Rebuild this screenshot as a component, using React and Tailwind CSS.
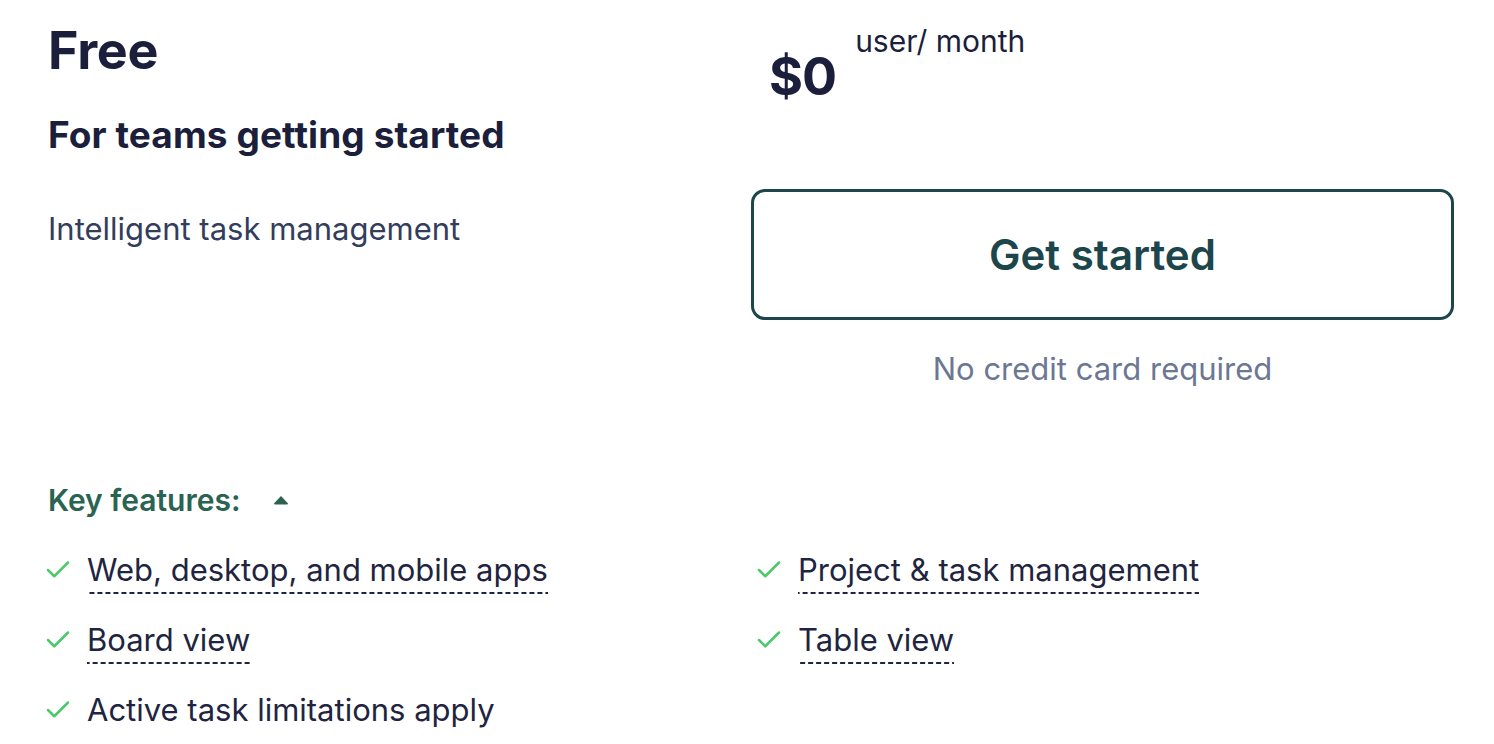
import { Check } from 'lucide-react'

const leftFeatures  = [
  { label: 'Web, desktop, and mobile apps', dashed: true },
  { label: 'Board view',                    dashed: true },
  { label: 'Active task limitations apply', dashed: false },
]
const rightFeatures = [
  { label: 'Project & task management', dashed: true },
  { label: 'Table view',                dashed: true },
]

function Feature({ label, dashed }) {
  return (
    <li className="flex items-start h-[70px]">
      <Check className="w-[30px] h-[30px] -ml-[5px] mt-[4px] text-[#4cc96a] shrink-0" strokeWidth={2} />
      <span
        className={`ml-[14px] text-[31px] leading-[38px] text-[#1f2540] pb-[5px] ${
          dashed
            ? 'bg-[linear-gradient(to_right,#1f2540_5px,transparent_5px)] bg-[length:8px_2px] bg-repeat-x bg-bottom'
            : ''
        }`}
      >
        {label}
      </span>
    </li>
  )
}

export default function App() {
  return (
    <div className="min-h-screen bg-white px-12 font-['Inter',sans-serif] overflow-hidden">
      <div className="grid grid-cols-[655px_703px] gap-12">
        <div className="pt-[20px]">
          <h1 className="text-[52px] leading-[62px] font-bold text-[#1b1f3b] tracking-[-0.3px]">Free</h1>
          <h2 className="mt-[31px] text-[37px] leading-[44px] font-bold text-[#1b1f3b] tracking-[0.1px]">For teams getting started</h2>
          <p className="mt-[53px] text-[31px] leading-[38px] text-[#333d5c]">Intelligent task management</p>
        </div>

        <div className="pt-[24px]">
          <div className="flex items-start pl-[18px]">
            <span className="mt-[23px] text-[52px] leading-[60px] font-bold text-[#1b1f3b] tracking-[-1px]">$0</span>
            <span className="ml-[19px] text-[30px] leading-[34px] text-[#1b1f3b]">user/ month</span>
          </div>
          <button className="mt-[82px] w-full h-[131px] rounded-[14px] border-[3px] border-[#1d464c] text-[42px] font-semibold text-[#1d464c]">
            Get started
          </button>
          <p className="mt-[30px] text-center text-[31px] leading-[38px] text-[#6b7793]">No credit card required</p>
        </div>
      </div>

      <div className="mt-[95px] flex items-center">
        <span className="text-[30px] leading-[34px] font-semibold text-[#2a6352]">Key features:</span>
        <svg className="ml-[32px]" width="16" height="10" viewBox="0 0 16 10">
          <path d="M8 1 L15 8.5 Q15 9.5 14 9.5 L2 9.5 Q1 9.5 1 8.5 Z" fill="#2a6352" />
        </svg>
      </div>

      <div className="mt-[34px] grid grid-cols-[711px_1fr]">
        <ul>
          {leftFeatures.map(f => <Feature key={f.label} {...f} />)}
        </ul>
        <ul>
          {rightFeatures.map(f => <Feature key={f.label} {...f} />)}
        </ul>
      </div>
    </div>
  )
}
